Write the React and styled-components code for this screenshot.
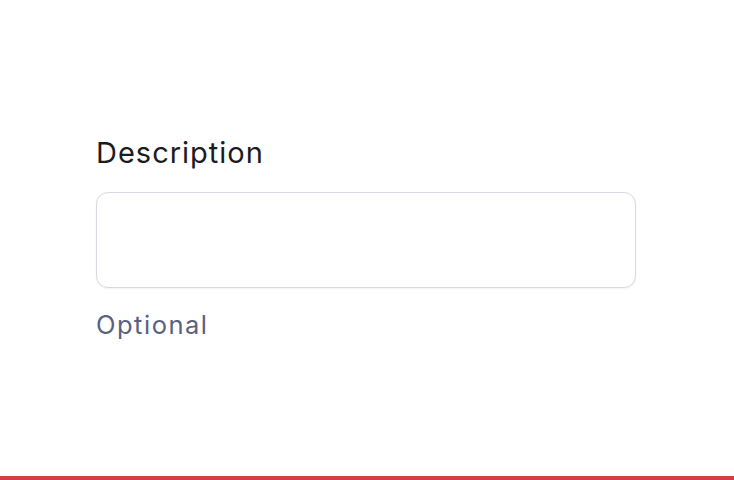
import React from 'react'
import styled, { createGlobalStyle } from 'styled-components'

const Global = createGlobalStyle`
  html, body {
    margin: 0;
    padding: 0;
    background: #ffffff;
  }
  * {
    box-sizing: border-box;
  }
`

const Page = styled.div`
  height: 480px;
  border-bottom: 4px solid #d13f3f;
  padding: 134px 98px 0 96px;
  font-family: Inter, "Noto Sans", sans-serif;
`

const Field = styled.div`
  display: flex;
  flex-direction: column;
  width: 540px;
`

const Label = styled.label`
  font-size: 29px;
  line-height: 38px;
  color: #1c1c1f;
  letter-spacing: 1px;
  margin-bottom: 20px;
`

const TextArea = styled.textarea`
  height: 96px;
  width: 100%;
  border: 1px solid #d9d8e2;
  border-radius: 12px;
  box-shadow: 0 1px 2px rgba(30, 30, 60, 0.06);
  resize: none;
  outline: none;
  padding: 12px 16px;
  font: inherit;
  font-size: 18px;
`

const Hint = styled.div`
  margin-top: 20px;
  font-size: 25.5px;
  line-height: 34px;
  letter-spacing: 1.5px;
  color: #5a6180;
`

export default function App () {
  return (
    <>
      <Global />
      <Page>
        <Field>
          <Label htmlFor="description">Description</Label>
          <TextArea id="description" />
          <Hint>Optional</Hint>
        </Field>
      </Page>
    </>
  )
}
